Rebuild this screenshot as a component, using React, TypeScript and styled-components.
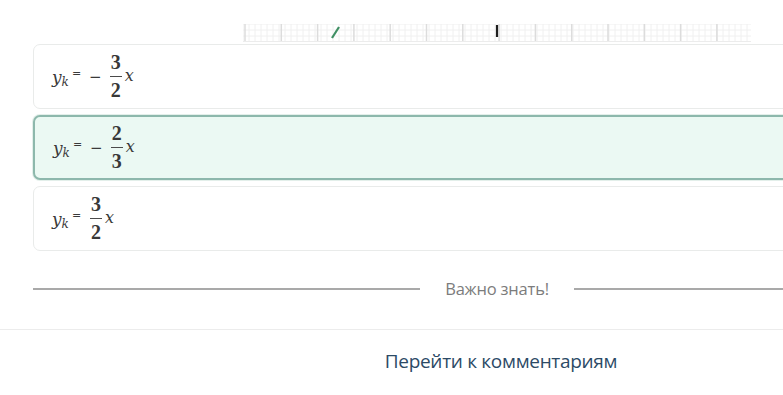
import styled, { createGlobalStyle } from 'styled-components';

const Global = createGlobalStyle`
  html, body {
    margin: 0;
    padding: 0;
    background: #ffffff;
    overflow: hidden;
  }
`;

const Page = styled.div`
  width: 994px;
  font-family: "Open Sans", "Noto Sans", sans-serif;
`;

const ChartStrip = styled.div`
  display: flex;
  justify-content: center;
  padding-top: 24px;
  height: 20px;
`;

const Options = styled.div`
  display: flex;
  flex-direction: column;
  gap: 6px;
  padding: 0 33px;
`;

const Option = styled.div<{ $selected?: boolean }>`
  height: 65px;
  box-sizing: border-box;
  display: flex;
  align-items: center;
  padding-left: 18px;
  border-radius: 7px;
  border: ${p => (p.$selected ? '2px solid #8db8ac' : '1px solid #e9ebea')};
  background: ${p => (p.$selected ? '#ebf9f3' : '#ffffff')};
  box-shadow: ${p => (p.$selected ? '0 0 0 1px #e3efea' : 'none')};
`;

const Formula = styled.div`
  display: flex;
  align-items: center;
  font-family: "DejaVu Serif", "Liberation Serif", serif;
  color: #3a3a3a;
`;

const Lhs = styled.span`
  font-style: italic;
  font-size: 17px;
  line-height: 20px;
  position: relative;
  top: 3px;

  sub {
    font-size: 12px;
    vertical-align: -3px;
  }
`;

const Var = styled.span`
  font-style: italic;
  font-size: 16px;
  position: relative;
  top: -1px;
`;

const Eq = styled.span`
  font-size: 11px;
  margin: 0 8px 0 3px;
  position: relative;
  top: -3px;
`;

const Minus = styled.span`
  font-size: 15px;
  margin-right: 7px;
`;

const Fraction = styled.span`
  display: inline-flex;
  flex-direction: column;
  align-items: center;
  font-family: "Liberation Serif", serif;
  font-size: 20px;
  font-weight: bold;
  line-height: 19px;
  margin: 0 3px 0 1px;
  color: #383838;
`;

const Bar = styled.span`
  width: 12px;
  height: 1px;
  background: #4a4a4a;
  margin: 4px 0 4px;
`;

const Divider = styled.div`
  display: flex;
  align-items: center;
  gap: 25px;
  padding: 0 33px;
  margin-top: 26px;
  color: #7c7c7c;
  font-size: 16.5px;
  letter-spacing: -0.2px;

  &::before, &::after {
    content: '';
    flex: 1;
    height: 2px;
    background: #a9a9a9;
  }
`;

const Footer = styled.div`
  margin-top: 29px;
  border-top: 1px solid #ececec;
  display: flex;
  justify-content: center;
  padding: 18px 0 0 8px;

  a {
    color: #2c4a66;
    font-size: 19px;
    text-decoration: none;
    letter-spacing: -0.3px;
  }
`;

function GridChart() {
  const w = 508;
  const h = 18;
  const minor = [];
  for (let x = 0; x <= w; x += 6) minor.push(<line key={'v' + x} x1={x} y1={0} x2={x} y2={h} stroke="#f0f0f0" strokeWidth={1} />);
  for (let y = 0; y <= h; y += 6) minor.push(<line key={'h' + y} x1={0} y1={y} x2={w} y2={y} stroke="#f0f0f0" strokeWidth={1} />);
  const major = [];
  for (let x = 2; x <= w; x += 36.3) major.push(<line key={'m' + x} x1={x} y1={0} x2={x} y2={h} stroke="#dcdcdc" strokeWidth={1.5} />);
  return (
    <svg width={w} height={h} viewBox={`0 0 ${w} ${h}`}>
      {minor}
      {major}
      <line x1={0} y1={h - 0.5} x2={w} y2={h - 0.5} stroke="#ececec" />
      <line x1={89} y1={14} x2={96} y2={3} stroke="#3f8f63" strokeWidth={2.2} />
      <line x1={254} y1={1} x2={254} y2={13} stroke="#1e1e1e" strokeWidth={2.2} />
    </svg>
  );
}

function Answer({ neg, num, den }: { neg?: boolean; num: number; den: number }) {
  return (
    <Formula>
      <Lhs>y<sub>k</sub></Lhs>
      <Eq>=</Eq>
      {neg && <Minus>−</Minus>}
      <Fraction>
        <span>{num}</span>
        <Bar />
        <span>{den}</span>
      </Fraction>
      <Var>x</Var>
    </Formula>
  );
}

export default function App() {
  return (
    <Page>
      <Global />
      <ChartStrip>
        <GridChart />
      </ChartStrip>
      <Options>
        <Option><Answer neg num={3} den={2} /></Option>
        <Option $selected><Answer neg num={2} den={3} /></Option>
        <Option><Answer num={3} den={2} /></Option>
      </Options>
      <Divider>Важно знать!</Divider>
      <Footer>
        <a href="#comments">Перейти к комментариям</a>
      </Footer>
    </Page>
  );
}
